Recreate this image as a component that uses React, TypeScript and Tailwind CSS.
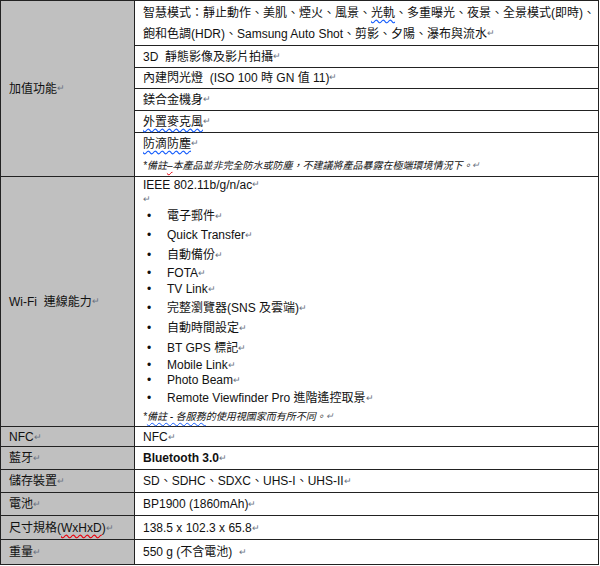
import React from "react";

const R = () => <span className="text-[9px] text-gray-500 align-middle">↵</span>;
const W = ({ c, children }: { c: string; children: React.ReactNode }) => (
  <span className={`underline decoration-wavy ${c} underline-offset-2`}>{children}</span>
);

const Line = ({ h, children, cls = "" }: { h: number; children: React.ReactNode; cls?: string }) => (
  <div className={`flex items-center whitespace-nowrap ${cls}`} style={{ height: h }}>{children}</div>
);

const B = ({ h, children }: { h: number; children: React.ReactNode }) => (
  <div className="flex items-center whitespace-nowrap" style={{ height: h }}>
    <span className="w-[24px] pl-[4px]">•</span>
    <span>{children}</span>
  </div>
);

function Row({ left, h, children }: { left: React.ReactNode; h: number; children: React.ReactNode }) {
  return (
    <div className="flex border-b border-[#222]" style={{ height: h }}>
      <div className="w-[134px] shrink-0 bg-[#c0c0c0] border-r border-[#222] flex items-center pl-[8px] whitespace-nowrap"><span>{left}</span></div>
      <div className="flex-1 pl-[8px] flex items-center whitespace-nowrap"><span>{children}</span></div>
    </div>
  );
}

export default function App() {
  return (
    <div className="w-[600px] h-[566px] bg-white text-[12px] text-[#111]" style={{ fontFamily: '"Liberation Sans", "Noto Sans CJK TC", sans-serif' }}>
      <div className="border border-[#222] border-b-0 w-[599px]">
        <div className="flex border-b border-[#222]">
          <div className="w-[134px] shrink-0 bg-[#c0c0c0] border-r border-[#222] flex items-center pl-[8px]">加值功能<R /></div>
          <div className="flex-1">
            <div className="pl-[8px] border-b border-[#222] h-[45px] flex flex-col justify-center">
              <Line h={21}>智慧模式：靜止動作、美肌、煙火、風景、<W c="decoration-blue-600">光軌</W>、多重曝光、夜景、全景模式(即時)、</Line>
              <Line h={21}>飽和色調(HDR)、Samsung Auto Shot、剪影、夕陽、瀑布與流水<R /></Line>
            </div>
            <div className="pl-[8px] border-b border-[#222] h-[22px] flex items-center">3D&nbsp; 靜態影像及影片拍攝<R /></div>
            <div className="pl-[8px] border-b border-[#222] h-[21px] flex items-center">內建閃光燈&nbsp; (ISO 100 時 GN 值 11)<R /></div>
            <div className="pl-[8px] border-b border-[#222] h-[22px] flex items-center">鎂合金機身<R /></div>
            <div className="pl-[8px] border-b border-[#222] h-[22px] flex items-center"><W c="decoration-blue-600">外置麥克風</W><R /></div>
            <div className="pl-[8px] h-[43px] flex flex-col justify-center">
              <Line h={22}><W c="decoration-blue-600">防滴防塵</W><R /></Line>
              <Line h={21} cls="italic text-[10px]">*備註 <W c="decoration-red-600">–</W>本產品並非完全防水或防塵，不建議將產品暴露在極端環境情況下。<R /></Line>
            </div>
          </div>
        </div>
        <div className="flex border-b border-[#222] h-[250px]">
          <div className="w-[134px] shrink-0 bg-[#c0c0c0] border-r border-[#222] flex items-center pl-[8px]">Wi-Fi&nbsp; 連線能力<R /></div>
          <div className="flex-1 pl-[8px] flex flex-col">
            <Line h={15}>IEEE 802.11b/g/n/ac<R /></Line>
            <Line h={15}><R /></Line>
            <B h={20}>電子郵件<R /></B>
            <B h={19}>Quick Transfer<R /></B>
            <B h={20}>自動備份<R /></B>
            <B h={17}>FOTA<R /></B>
            <B h={16}>TV Link<R /></B>
            <B h={21}>完整瀏覽器(SNS 及雲端)<R /></B>
            <B h={21}>自動時間設定<R /></B>
            <B h={20}>BT GPS 標記<R /></B>
            <B h={15}>Mobile Link<R /></B>
            <B h={15}>Photo Beam<R /></B>
            <B h={20}>Remote Viewfinder Pro 進階遙控取景<R /></B>
            <Line h={19} cls="italic text-[10px]">*<W c="decoration-blue-600">備註 - 各服務</W>的使用視國家而有所不同。<R /></Line>
          </div>
        </div>
        <Row left={<>NFC<R /></>} h={20}>NFC<R /></Row>
        <Row left={<>藍牙<R /></>} h={23}><span className="font-bold">Bluetooth 3.0</span><R /></Row>
        <Row left={<>儲存裝置<R /></>} h={23}>SD、SDHC、SDXC、UHS-I、UHS-II<R /></Row>
        <Row left={<>電池<R /></>} h={23}>BP1900 (1860mAh)<R /></Row>
        <Row left={<>尺寸規格(<W c="decoration-red-600">WxHxD</W>)<R /></>} h={24}>138.5 x 102.3 x 65.8<R /></Row>
        <Row left={<>重量<R /></>} h={25}>550 g (不含電池) &nbsp;<R /></Row>
      </div>
    </div>
  );
}
